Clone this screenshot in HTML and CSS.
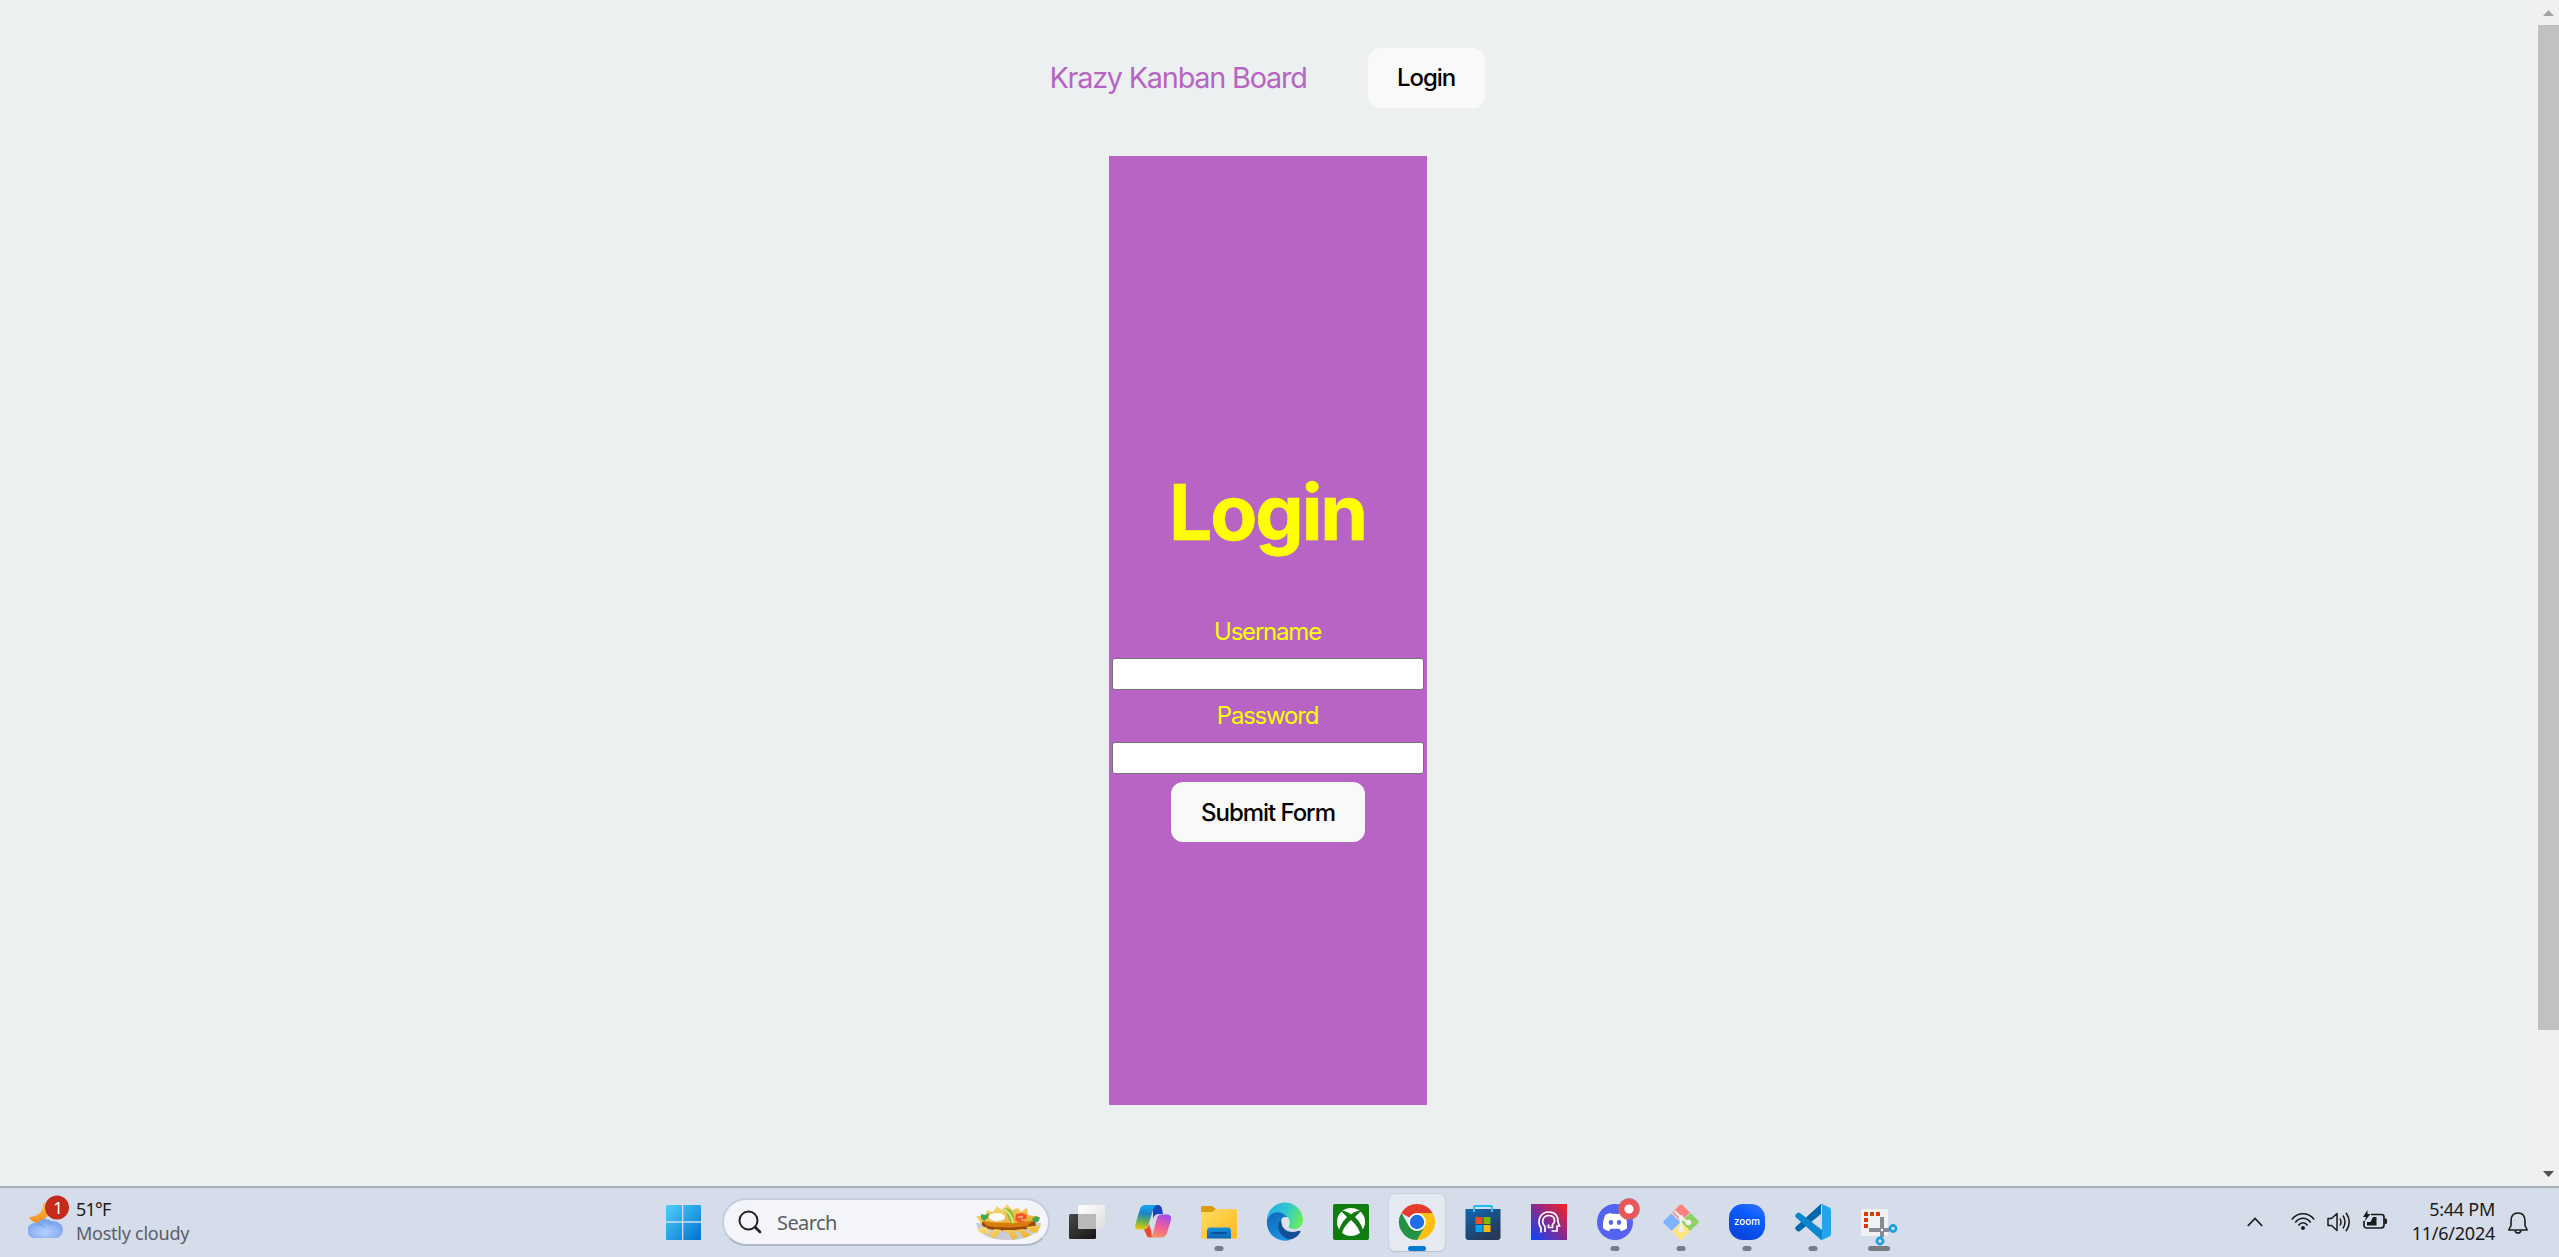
FILE: index.html
```html
<!DOCTYPE html>
<html lang="en">
<head>
<meta charset="utf-8">
<title>Krazy Kanban Board</title>
<link rel="stylesheet" href="styles.css">
</head>
<body>
<div class="window">
  <div class="page">
    <nav class="nav">
      <a class="brand">Krazy Kanban Board</a>
      <button class="btn" type="button">Login</button>
    </nav>
    <form class="login">
      <h1>Login</h1>
      <label for="username">Username</label>
      <input id="username" type="text">
      <label for="password">Password</label>
      <input id="password" type="password">
      <button class="btn submit" type="button">Submit Form</button>
    </form>
  </div>
  <div class="scrollbar">
    <svg class="arrow" width="11" height="6" viewBox="0 0 11 6"><path d="M0 6 5.500 0 11 6Z" fill="#a3a3a3"/></svg>
    <div class="thumb"></div>
    <svg class="arrow down" width="11" height="6" viewBox="0 0 11 6"><path d="M0 0H11L5.500 6Z" fill="#505050"/></svg>
  </div>
</div>

<footer class="taskbar">
  <div class="weather">
    <svg width="42" height="44" viewBox="0 0 42 44">
      <defs>
        <linearGradient id="moon" x1="0" y1="0" x2="0" y2="1"><stop offset="0" stop-color="#fcc43c"/><stop offset="1" stop-color="#f08a24"/></linearGradient>
        <radialGradient id="cloud" cx=".5" cy=".7" r=".6"><stop offset="0" stop-color="#b5d2fb"/><stop offset="1" stop-color="#7ba4ee"/></radialGradient>
      </defs>
      <path d="M15 8C16 17 9 22 1 22C3 26 8 29 13 28L22 18V8Z" fill="url(#moon)"/>
      <path d="M8 43A7.500 7.500 0 1 1 9 28.500A9.500 9.500 0 0 1 24 27A8.300 8.300 0 1 1 29 43Z" fill="url(#cloud)"/>
      <path d="M7 29Q13 28 16 32M21 30Q23 26 27 26" fill="none" stroke="#6f97e4" stroke-width="1.200" opacity=".7"/>
      <circle cx="29" cy="12.500" r="12" fill="#c42b1c"/>
      <text x="30" y="18.500" text-anchor="middle" class="badge">1</text>
    </svg>
    <div class="weather-text"><span class="temp">51°F</span><span class="sky">Mostly cloudy</span></div>
  </div>

  <div class="apps">
    <div class="app">
      <svg width="36" height="36" viewBox="0 0 36 36">
        <defs><linearGradient id="win" x2="1" y2="1"><stop offset="0" stop-color="#4fd0fb"/><stop offset="1" stop-color="#0072d0"/></linearGradient></defs>
        <path d="M2 1H17V17.300H1V2Q1 1 2 1ZM18.300 1H35Q36 1 36 2V17.300H18.300ZM1 18.700H17V36H2Q1 36 1 35ZM18.300 18.700H36V35Q36 36 35 36H18.300Z" fill="url(#win)"/>
      </svg>
    </div>
    <div class="search">
      <svg width="24" height="24" viewBox="0 0 24 24" fill="none" stroke="#222" stroke-width="2"><circle cx="10.500" cy="10.500" r="9"/><path d="M17 17 22 22" stroke-width="2.600" stroke-linecap="round"/></svg>
      <span>Search</span>
      <svg class="nachos" width="67" height="38" viewBox="0 0 67 38">
        <defs><linearGradient id="chip" x2="1" y2="1"><stop offset="0" stop-color="#ffe48a"/><stop offset="1" stop-color="#e7a51c"/></linearGradient></defs>
        <path d="M1 20Q4 37 33 37Q62 37 66 20Z" fill="#c9ccd2"/>
        <path d="M1 13 10 13 12 7 18 9 22 3 27 7 32 1 37 7 43 5 46 9 52 5 53 12 65 14 61 20H6Z" fill="url(#chip)"/>
        <path d="M7 19Q33 23 60 18L61 23Q50 28 33 28Q12 28 7 22Z" fill="#9a4a08"/>
        <path d="M7 18Q33 22 58 18L52 23Q30 26 12 23Z" fill="#d67b0c"/>
        <path d="M2 26 11 24 16 31 19 26 27 27 19 36 14 31 5 30ZM27 27 39 27 43 34 38 37 33 30ZM39 27 48 26 56 32 49 35 45 30ZM51 24 66 22 62 30 56 29Z" fill="url(#chip)"/>
        <ellipse cx="22" cy="14" rx="8" ry="4" fill="#fff"/><path d="M14 15Q20 21 30 16" fill="none" stroke="#ddd"/>
        <path d="M28 6Q36 3 39 13L39 21Q35 21 33 14Q31 8 28 6Z" fill="#94bd35"/><path d="M29 6Q37 11 38 20" fill="none" stroke="#d9e888" stroke-width="2"/>
        <path d="M41 11 47 10 52 12 51 18 45 20 40 17Z" fill="#f05a28"/><path d="M43 14H48M46 17H51" stroke="#fb9870" stroke-width="2"/>
        <path d="M6 11 10 12 14 10 13 15 9 18 6 15ZM57 16 61 13 65 15 63 19 58 19Z" fill="#3fa652"/>
      </svg>
    </div>
    <div class="app first">
      <svg width="36" height="36" viewBox="0 0 36 36">
        <defs><linearGradient id="tv1" x2="1" y2="1"><stop offset="0" stop-color="#484848"/><stop offset="1" stop-color="#151515"/></linearGradient><linearGradient id="tv2" x2="1" y2="1"><stop offset="0" stop-color="#fff"/><stop offset="1" stop-color="#dcdcdc"/></linearGradient></defs>
        <rect x="0" y="10" width="27" height="25" rx="1.500" fill="url(#tv1)"/><rect x="9" y="1" width="27" height="24" rx="1.500" fill="url(#tv2)"/><path d="M9 10H27V25H10.500Q9 25 9 23.500Z" fill="#b9b9b9"/>
      </svg>
    </div>
    <div class="app">
      <svg width="36" height="36" viewBox="0 0 36 36">
        <defs>
          <linearGradient id="cp1" x1=".4" y1="0" x2=".3" y2="1"><stop offset="0" stop-color="#12a6f0"/><stop offset=".35" stop-color="#1d83c8"/><stop offset=".65" stop-color="#61ad56"/><stop offset="1" stop-color="#f2cb0c"/></linearGradient>
          <linearGradient id="cp2" x1=".6" y1="0" x2=".3" y2="1"><stop offset="0" stop-color="#a34fe8"/><stop offset=".5" stop-color="#ee5d98"/><stop offset="1" stop-color="#fb9163"/></linearGradient>
        </defs>
        <path d="M18 1H23Q26 1 27 5L28 10H24Q19 10 18 15Z" fill="#1743c0"/>
        <path d="M10 1H22Q19 2 18 6L13 22Q11.500 25.500 8 25.500H3Q-1 25.500 .5 20L5 5Q6.500 1 10 1Z" fill="url(#cp1)"/>
        <path d="M9 25.500Q13 25 14 20L16 26 17 33.500H15Q12 33.500 11 30Z" fill="#e8492f"/>
        <path d="M26 10.500H32Q37 10.500 36 16L32 29Q30.500 33.500 26 33.500H14Q17 33 18 29L22 14Q23 10.500 26 10.500Z" fill="url(#cp2)"/>
      </svg>
    </div>
    <div class="app">
      <svg width="36" height="36" viewBox="0 0 36 36">
        <defs><linearGradient id="fold" x2="1" y2="1"><stop offset="0" stop-color="#ffdc62"/><stop offset="1" stop-color="#fdb91f"/></linearGradient><linearGradient id="foldb" x2="0" y2="1"><stop offset="0" stop-color="#1590dc"/><stop offset="1" stop-color="#0c67b8"/></linearGradient></defs>
        <path d="M0 3.500Q0 2 1.500 2H11L15 5H18V12H0Z" fill="#dd9c0d"/>
        <path d="M0 8H11L15 5H34.500Q36 5 36 6.500V34.500H0Z" fill="url(#fold)"/>
        <path d="M6 34.500V27Q6 23.500 9 23.500H27Q30 23.500 30 27V34.500Z" fill="url(#foldb)"/><path d="M11 29H25" stroke="#08508f" stroke-width="1.800" stroke-linecap="round"/>
      </svg>
      <i class="mark"></i>
    </div>
    <div class="app">
      <svg width="36" height="36" viewBox="0 0 36 36">
        <defs><linearGradient id="ed1" x1="0" y1=".3" x2="1" y2=".6"><stop offset="0" stop-color="#24aeea"/><stop offset=".5" stop-color="#31c8cf"/><stop offset="1" stop-color="#6cec58"/></linearGradient><linearGradient id="ed2" x1="0" y1="0" x2=".5" y2="1"><stop offset="0" stop-color="#0f65b8"/><stop offset="1" stop-color="#1d90df"/></linearGradient></defs>
        <path d="M0 18A18 18 0 0 1 36 15C36.500 21 32 25 27 25Q20.500 24.500 22 21.500Q24 17 20 14Q10 4 0 18Z" fill="url(#ed1)"/>
        <path d="M0 17C2 8 13 5 20 13Q13 13 12.500 21L23 36A18 18 0 0 1 0 17Z" fill="url(#ed2)"/>
        <path d="M14.500 15C7 22 14 35 23.500 35.500Q30 34 33.500 28Q33.500 26 31 27C23 30 13 26 14.500 15Z" fill="#124f98"/>
        <path d="M14.500 17Q14.500 13 18 13Q22.500 13 22.500 18Q22.500 20 21.500 21.500Q21 24 24 25Q14.500 25 14.500 17Z" fill="#dbe5f0"/>
      </svg>
    </div>
    <div class="app">
      <svg width="36" height="36" viewBox="0 0 36 36">
        <rect width="36" height="36" rx="2" fill="#107c10"/>
        <circle cx="18" cy="18" r="14" fill="#fff"/>
        <path d="M8 7Q12 6 18 10.500Q24 6 28 7Q25.500 9.500 22 13Q29 20 30.500 28L27.500 30Q25 22 18 16Q11 22 8.500 30L5.500 28Q7 20 14 13Q10.500 9.500 8 7Z" fill="#107c10"/>
      </svg>
    </div>
    <div class="app active">
      <svg width="36" height="36" viewBox="0 0 36 36">
        <path d="M18 18 2.400 9A18 18 0 0 1 33.600 9Z" fill="#e33b2e"/><path d="M18 9H33.600A18 18 0 0 1 18 36L25.800 22.500Z" fill="#fdc010"/><path d="M10.200 22.500 2.400 9A18 18 0 0 0 18 36L25.800 22.500Z" fill="#229342"/>
        <circle cx="18" cy="18" r="9" fill="#fff"/><circle cx="18" cy="18" r="7.200" fill="#1f6fe8"/>
      </svg>
      <i class="mark"></i>
    </div>
    <div class="app">
      <svg width="36" height="36" viewBox="0 0 36 36">
        <defs><linearGradient id="st" x2=".6" y2="1"><stop offset="0" stop-color="#0f68b4"/><stop offset="1" stop-color="#253858"/></linearGradient></defs>
        <path d="M9 8V3Q9 2 10 2H26Q27 2 27 3V8" fill="none" stroke="#22bdf0" stroke-width="2"/>
        <path d="M.5 5H35.500V33Q35.500 36 32.500 36H3.500Q.5 36 .5 33Z" fill="url(#st)"/><path d="M9 5V8M27 5V8" stroke="#35c5f3" stroke-width="2"/>
        <path d="M10.500 13H17.500V20H10.500Z" fill="#f25022"/><path d="M18.500 13H25.500V20H18.500Z" fill="#7fba00"/><path d="M10.500 21H17.500V28H10.500Z" fill="#00a4ef"/><path d="M18.500 21H25.500V28H18.500Z" fill="#ffb900"/>
      </svg>
    </div>
    <div class="app">
      <svg width="36" height="36" viewBox="0 0 36 36">
        <defs><linearGradient id="head" x1="0" y1="1" x2="1" y2="0"><stop offset="0" stop-color="#0647ff"/><stop offset=".5" stop-color="#842b92"/><stop offset="1" stop-color="#ff2020"/></linearGradient></defs>
        <rect width="36" height="36" fill="url(#head)"/>
        <path d="M10 28.500V24C5.500 17 9 8 18 8C24.500 8 27.500 12.500 27 18L28.500 22H26V27H20.500M14 28V22.500C9.500 18 12 11.500 18 11.500C24 11.500 25 17.500 21.500 20.500V23.500H17.500V20.500" fill="none" stroke="#fff" stroke-width="1.700"/>
      </svg>
    </div>
    <div class="app">
      <svg width="36" height="36" viewBox="0 0 36 36">
        <circle cx="18" cy="18" r="18" fill="#5561f0"/>
        <path d="M14.500 9.500 13.600 8.800Q10.500 9.300 8.500 10.500Q5.500 15.500 6 24Q9 26.500 12 27L13.500 24.500H22.500L24 27Q27 26.500 30 24Q30.500 15.500 27.500 10.500Q25.500 9.300 22.400 8.800L21.500 9.800Q18 9.300 14.500 9.500Z" fill="#fff" transform="translate(0 .3)"/>
        <ellipse cx="14" cy="18.500" rx="2.200" ry="2.400" fill="#5561f0"/><ellipse cx="22" cy="18.500" rx="2.200" ry="2.400" fill="#5561f0"/>
        <circle cx="32" cy="5" r="10.500" fill="#ec5458" stroke="#a5777f" stroke-width=".8"/><circle cx="32" cy="5" r="4.600" fill="#fff"/>
      </svg>
      <i class="mark"></i>
    </div>
    <div class="app">
      <svg width="36" height="36" viewBox="0 0 36 36">
        <path d="M9.500 8.500 16 1.500Q18 -.5 20 1.500L27 8.500 18 17.500Z" fill="#ff8080"/><path d="M8.500 9.500 17.500 18.500 9 27 1 19.500Q-.5 18 1 16.500Z" fill="#80b3ff"/><path d="M27.500 9 35 16.500Q36.500 18 35 19.500L27 27 18 18Z" fill="#8dd35f"/><path d="M18 18 27 27 19.500 35Q18 36.500 16.500 35L9 27Z" fill="#ffe680"/>
        <path d="M11.500 7 18 13.500V25M18.500 13.500 25.500 19" stroke="#eef2ef" stroke-width="2.400" fill="none"/><circle cx="18" cy="13.500" r="2.400" fill="#eef2ef"/><circle cx="25.500" cy="18.500" r="2.800" fill="#eef2ef"/><circle cx="18" cy="25.500" r="2.800" fill="#eef2ef"/>
      </svg>
      <i class="mark"></i>
    </div>
    <div class="app">
      <svg width="36" height="36" viewBox="0 0 36 36">
        <defs><linearGradient id="zm" x1="1" y1="0" x2=".5" y2="1"><stop offset="0" stop-color="#3a78f4"/><stop offset=".4" stop-color="#0b5cff"/><stop offset="1" stop-color="#0846dc"/></linearGradient></defs>
        <rect width="36" height="36" rx="14" fill="url(#zm)"/><text x="5" y="21" textLength="26" lengthAdjust="spacingAndGlyphs" class="zoom">zoom</text>
      </svg>
      <i class="mark"></i>
    </div>
    <div class="app">
      <svg width="36" height="36" viewBox="0 0 36 36">
        <path d="M26 0V10L5 27Q3.500 28 2.200 27L.6 25.300Q-.3 24 .8 22.800L25 .8Z" fill="#0069ad"/>
        <path d="M.8 13.200Q-.3 12 .6 10.700L2.200 9Q3.500 8 5 9L27 26V36L25 35Z" fill="#0b86cf"/>
        <path d="M25 .6Q26 -.2 27.500 .2L34.500 3.500Q36 4.200 36 6V30Q36 31.800 34.500 32.500L27.500 35.800Q26 36.200 25 35.400Q27 35.500 27 33V3Q27 .5 25 .6Z" fill="#23a5ee"/>
      </svg>
      <i class="mark"></i>
    </div>
    <div class="app">
      <svg width="36" height="36" viewBox="0 0 36 36">
        <rect x="0" y="5" width="27" height="27" rx="2.500" fill="#f0f1f3"/>
        <path d="M3 8H7V12H3ZM9 8H13V12H9ZM15 8H19V12H15ZM3 14H7V18H3ZM3 20H7V24H3Z" fill="#d63b09"/>
        <path d="M21 13V33M8 26H28" stroke="#858b92" stroke-width="4"/><circle cx="21" cy="26" r="1.200" fill="#fff"/>
        <circle cx="32" cy="24.500" r="3.100" fill="none" stroke="#1b9de2" stroke-width="2.600"/><circle cx="19" cy="37" r="3.100" fill="none" stroke="#1b9de2" stroke-width="2.600"/>
      </svg>
      <i class="mark wide"></i>
    </div>
  </div>

  <div class="tray">
    <svg class="chev" width="16" height="10" viewBox="0 0 16 10"><path d="M.8 9 8 1.500 15.200 9" fill="none" stroke="#1a1a1a" stroke-width="1.700"/></svg>
    <svg class="wifi" width="24" height="19" viewBox="0 0 24 19" fill="none" stroke="#1a1a1a" stroke-width="1.600"><path d="M.8 7.500Q5.500 1.800 12 1.800T23.200 7.500M4.300 10.500Q7.500 6.300 12 6.300T19.700 10.500M7.500 13.500Q9.300 10.800 12 10.800T16.500 13.500"/><circle cx="12" cy="16" r="2" fill="#1a1a1a" stroke="none"/></svg>
    <svg class="vol" width="24" height="20" viewBox="0 0 24 20" fill="none" stroke="#1a1a1a" stroke-width="1.500"><path d="M1 6.500H4.500L10 1.500V18.500L4.500 13.500H1Z" stroke-linejoin="round"/><path d="M13 6.500Q15 10 13 13.500M16 3.500Q20 10 16 16.500M19 .8Q25.500 10 19 19.200"/></svg>
    <svg class="bat" width="24" height="20" viewBox="0 0 24 20"><path d="M8 4.500H18.500Q21 4.500 21 7V15Q21 18 18 18H4Q1 18 1 15V11" fill="none" stroke="#1a1a1a" stroke-width="1.700"/><path d="M4 12 7.500 12 10 7H13.500V15.500H4ZM21.500 8.500H23Q24 8.500 24 10V12.500Q24 14 23 14H21.500ZM4.500 0 0 7H3L1.500 11.500 7.500 4H4.500Z" fill="#1a1a1a"/></svg>
    <div class="clock"><span>5:44 PM</span><span class="date">11/6/2024</span></div>
    <svg class="bell" width="20" height="22" viewBox="0 0 20 22" fill="none" stroke="#1a1a1a" stroke-width="1.600"><path d="M3 9Q3 1 10 1T17 9V13.500L19.200 18H.8L3 13.500Z" stroke-linejoin="round"/><path d="M7 18.500Q7.500 21 10 21T13 18.500"/></svg>
  </div>
</footer>
</body>
</html>
```
FILE: styles.css
```css
* { box-sizing: border-box; }
body {
  margin: 0;
  height: 1257px;
  display: flex;
  flex-direction: column;
  overflow: hidden;
  background: #ecf0f1;
  font-family: Inter, sans-serif;
}
.window { flex: 1; display: flex; min-height: 0; }
.page {
  flex: 1;
  display: flex;
  flex-direction: column;
  align-items: center;
  letter-spacing: -1.2px;
}
.nav { display: flex; align-items: center; gap: 61px; padding: 48px 2px 48px 0; }
.brand { color: #b764c4; font-size: 28.8px; line-height: 36px; }
.btn {
  width: 117px;
  height: 60px;
  padding: 0;
  border: 0;
  border-radius: 12px;
  background: #f9f9f9;
  color: #000;
  font: 500 24px/36px Inter, sans-serif;
  letter-spacing: -1.05px;
}
.login {
  display: flex;
  flex-direction: column;
  align-items: center;
  width: 318px;
  height: 949px;
  padding: 315px 3px 0;
  background: #b764c4;
  color: #ff0;
}
.login h1 {
  margin: 0 0 59px;
  padding-right: 1px;
  font-size: 76.8px;
  line-height: 84px;
  font-weight: 700;
  letter-spacing: -2.1px;
  -webkit-text-stroke: .6px #ff0;
}
.login label { font-size: 24px; line-height: 36px; margin-bottom: 8px; padding-right: 1px; }
.login input {
  width: 312px;
  height: 32px;
  margin: 0 0 8px;
  border: 1px solid #767676;
  border-radius: 3px;
  background: #fff;
}
.login .submit { width: 194px; padding-top: 1px; }

.scrollbar {
  width: 23px;
  display: flex;
  flex-direction: column;
  align-items: center;
  padding: 10px 0 9px 2px;
  background: #f0f0f0;
}
.thumb { width: 21px; height: 1005px; margin-top: 9px; background: #c1c1c1; }
.down { margin-top: auto; }

.taskbar {
  height: 71px;
  display: flex;
  border-top: 2px solid #a9afb7;
  background: #d5dcea;
  color: #1a1a1a;
  font: 18px/24px "Noto Sans", sans-serif;
}
.weather { width: 650px; display: flex; padding: 7px 0 0 28px; }
.weather-text { display: flex; flex-direction: column; margin: 2px 0 0 6px; }
.temp { letter-spacing: -.8px; }
.sky { color: #5b5f66; letter-spacing: -.25px; }
.badge { fill: #fff; font: 17px "Noto Sans", sans-serif; }
.zoom { fill: #fff; font: 500 10.500px Inter, sans-serif; }
.apps { display: flex; }
.app { position: relative; width: 66px; padding: 16px 15px 0; }
.app svg { display: block; overflow: visible; position: relative; }
.first { margin-left: 4px; }
.search {
  display: flex;
  align-items: center;
  width: 328px;
  height: 48px;
  margin: 10px 0 0 6px;
  padding: 0 6px 0 14px;
  border: 2px solid #c5cddd;
  border-bottom-color: #b0b7c5;
  border-radius: 24px;
  background: #f3f5fa;
  color: #5b5d61;
  font-size: 20px;
}
.search span { margin: 1px 0 0 15px; letter-spacing: -.6px; }
.nachos { margin-left: auto; }
.mark {
  position: absolute;
  left: 50%;
  top: 58px;
  width: 9px;
  height: 5px;
  transform: translateX(-50%);
  border-radius: 3px;
  background: #777c85;
}
.mark.wide { width: 22px; }
.active .mark { width: 18px; background: #0078d4; }
.active::before {
  content: "";
  position: absolute;
  left: 5px;
  top: 6px;
  width: 56px;
  height: 57px;
  border-radius: 6px;
  background: #e5e9f2;
  box-shadow: 0 1px 1px #b9bfcb, 0 0 0 1px #ccd3e0;
}
.tray { display: flex; margin-left: auto; padding-right: 31px; }
.chev { margin: 29px 28px 0 0; }
.wifi { margin: 24px 12px 0 0; }
.vol { margin: 24px 12px 0 0; }
.bat { margin: 22px 24px 0 0; }
.clock {
  width: 84px;
  margin: 9px 13px 0 0;
  display: flex;
  flex-direction: column;
  align-items: flex-end;
  letter-spacing: -.25px;
}
.bell { margin-top: 24px; }
```
